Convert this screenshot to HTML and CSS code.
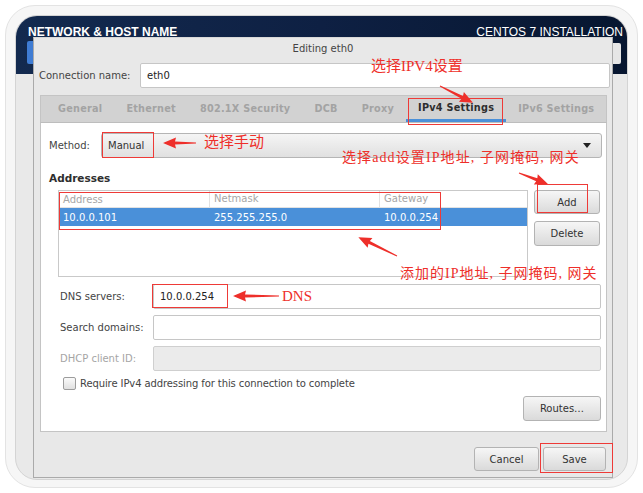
FILE: index.html
```html
<!DOCTYPE html>
<html lang="en">
<head>
<meta charset="utf-8">
<title>Editing eth0</title>
<link rel="stylesheet" href="styles.css">
</head>
<body>
<div class="frame">
  <div class="window">
    <div class="header">
      <div class="header-row">
        <span class="spoke-title">NETWORK &amp; HOST NAME</span>
        <span class="product">CENTOS 7 INSTALLATION</span>
      </div>
      <div class="header-buttons">
        <span class="done-btn"></span>
        <span class="kbd-btn"></span>
      </div>
    </div>

    <div class="dialog">
      <div class="dialog-title">Editing eth0</div>
      <div class="conn-row">
        <span class="conn-label">Connection name:</span>
        <div class="entry">eth0</div>
      </div>

      <div class="notebook">
        <div class="tabs">
          <span class="tab">General</span>
          <span class="tab">Ethernet</span>
          <span class="tab">802.1X Security</span>
          <span class="tab">DCB</span>
          <span class="tab">Proxy</span>
          <span class="tab active">IPv4 Settings</span>
          <span class="tab">IPv6 Settings</span>
        </div>
        <div class="panel">
          <div class="method-row">
            <span class="method-label">Method:</span>
            <div class="combo"><span>Manual</span><span class="combo-arrow"></span></div>
          </div>
          <div class="section-title">Addresses</div>
          <div class="addr-row">
            <div class="addr-table">
              <div class="tr thead">
                <span class="c1">Address</span>
                <span class="c2">Netmask</span>
                <span class="c3">Gateway</span>
              </div>
              <div class="tr selected">
                <span class="c1">10.0.0.101</span>
                <span class="c2">255.255.255.0</span>
                <span class="c3">10.0.0.254</span>
              </div>
            </div>
            <div class="addr-buttons">
              <div class="btn btn-add">Add</div>
              <div class="btn btn-del">Delete</div>
            </div>
          </div>
          <div class="form">
            <span class="f-label">DNS servers:</span>
            <div class="entry">10.0.0.254</div>
            <span class="f-label">Search domains:</span>
            <div class="entry"></div>
            <span class="f-label muted">DHCP client ID:</span>
            <div class="entry disabled"></div>
          </div>
          <div class="check-row">
            <span class="checkbox"></span>
            <span>Require IPv4 addressing for this connection to complete</span>
          </div>
          <div class="routes-row">
            <div class="btn btn-routes">Routes…</div>
          </div>
        </div>
      </div>

      <div class="dialog-footer">
        <div class="btn btn-footer">Cancel</div>
        <div class="btn btn-footer btn-save">Save</div>
      </div>
    </div>
  </div>
</div>

<!-- red annotations drawn over the screenshot -->
<div class="note-box box-ipv4"></div>
<div class="note-box box-manual"></div>
<div class="note-box box-add"></div>
<div class="note-box box-table"></div>
<div class="note-box box-dns"></div>
<div class="note-box box-save"></div>

<span class="note note-ipv4">选择IPV4设置</span>
<span class="note note-manual">选择手动</span>
<span class="note note-add">选择add设置IP地址, 子网掩码, 网关</span>
<span class="note note-added">添加的IP地址, 子网掩码, 网关</span>
<span class="note note-dns">DNS</span>

<svg class="arrows" width="643" height="493" viewBox="0 0 643 493">
  <g fill="#ee2f2a">
    <g transform="translate(440,86) rotate(27)"><polygon points="0,-0.5 25,-1.6 24,-5.5 37,0 24,5.5 25,1.6 0,0.5"/></g>
    <g transform="translate(196,143) rotate(180)"><polygon points="0,-0.5 21,-1.6 20,-5.5 33,0 20,5.5 21,1.6 0,0.5"/></g>
    <g transform="translate(519,173) rotate(21)"><polygon points="0,-0.5 19,-1.6 18,-5.5 31,0 18,5.5 19,1.6 0,0.5"/></g>
    <g transform="translate(397,256) rotate(206)"><polygon points="0,-0.5 31,-1.6 30,-5.5 43,0 30,5.5 31,1.6 0,0.5"/></g>
    <g transform="translate(279,296) rotate(180)"><polygon points="0,-0.5 34,-1.6 33,-5.5 46,0 33,5.5 34,1.6 0,0.5"/></g>
  </g>
</svg>
</body>
</html>
```

FILE: styles.css
```css
* { box-sizing: border-box; }

html, body {
  margin: 0;
  padding: 0;
  background: #ffffff;
  width: 643px;
  height: 493px;
  overflow: hidden;
  font-family: "DejaVu Sans", "Liberation Sans", sans-serif;
  font-size: 10px;
  color: #333;
}

.frame {
  position: relative;
  margin: 5px;
  width: 633px;
  height: 483px;
  padding: 9px;
  border: 1px solid #e3e3e3;
  border-radius: 30px;
  background: #f6f6f6;
}

.window {
  position: relative;
  width: 613px;
  height: 465px;
  border-radius: 22px;
  overflow: hidden;
  background: #e9e9e9;
  border: 1px solid #d4d4d4;
}

.header {
  height: 58px;
  background: linear-gradient(90deg, #132a4f 0%, #0e2043 50%, #071630 100%);
  color: #fff;
}

.header-row {
  display: flex;
  justify-content: space-between;
  align-items: center;
  padding: 7px 4px 0 12px;
  height: 24px;
  font-family: "Liberation Sans", sans-serif;
  font-size: 12px;
}

.spoke-title { font-weight: bold; }

.header-buttons {
  display: flex;
  justify-content: space-between;
  padding: 1px 6px 0 11px;
}

.done-btn {
  width: 12px;
  height: 23px;
  background: #3f7cd3;
  border-radius: 2px;
}

.kbd-btn {
  width: 12px;
  height: 21px;
  margin-top: 2px;
  background: #e6e6e6;
  border-radius: 2px;
}

/* ---------- dialog ---------- */
.dialog {
  position: absolute;
  left: 17px;
  top: 21px;
  width: 580px;
  height: 441px;
  background: #e8e8e8;
  border: 1px solid #aaaaaa;
  border-top-color: #d8d8d8;
  display: flex;
  flex-direction: column;
}

.dialog-title {
  height: 23px;
  line-height: 22px;
  text-align: center;
  color: #444;
}

.conn-row {
  display: flex;
  align-items: center;
  margin-top: 2px;
  padding: 0 2px 0 5px;
}

.conn-label { width: 101px; color: #444; }

.entry {
  flex: 1;
  height: 25px;
  background: #fff;
  border: 1px solid #c6c6c6;
  border-radius: 2px;
  padding: 0 6px;
  line-height: 23px;
  color: #222;
}

.entry.disabled { background: #ebebeb; border-color: #cfcfcf; }

.notebook {
  margin: 7px 5px 0 6px;
}

.tabs {
  display: flex;
  height: 28px;
  padding-left: 5px;
  background: #d2d2d2;
  border: 1px solid #c4c4c4;
  border-bottom-color: #bdbdbd;
  white-space: nowrap;
}

.tab {
  flex: none;
  padding: 0 12px;
  line-height: 26px;
  font-weight: bold;
  font-size: 9.7px;
  color: #a3a3a3;
  letter-spacing: 0.25px;
}

.tab.active {
  color: #2e2e2e;
  border-bottom: 3px solid #4a90d9;
  line-height: 24px;
}

.panel {
  height: 309px;
  background: #fff;
  border: 1px solid #c4c4c4;
  border-top: none;
  padding: 10px 4px 0 8px;
}

.method-row {
  display: flex;
  align-items: center;
}

.method-label { width: 52px; color: #444; }

.combo {
  flex: 1;
  height: 25px;
  display: flex;
  align-items: center;
  justify-content: space-between;
  padding: 0 10px 0 6px;
  background: linear-gradient(#f5f5f5, #e0e0e0);
  border: 1px solid #b5b5b5;
  border-radius: 3px;
  color: #333;
}

.combo-arrow {
  width: 0;
  height: 0;
  border-left: 4px solid transparent;
  border-right: 4px solid transparent;
  border-top: 5px solid #222;
}

.section-title {
  margin-top: 14px;
  font-weight: bold;
  color: #2e2e2e;
  font-size: 10.5px;
  height: 12px;
}

.addr-row {
  display: flex;
  gap: 6px;
  margin: 6px 0 0 9px;
  height: 87px;
}

.addr-table {
  width: 470px;
  height: 87px;
  border: 1px solid #c9c9c9;
  background: #fff;
}

.tr {
  display: flex;
  height: 18px;
  align-items: center;
}

.thead {
  height: 17px;
  color: #a6a6a6;
  border-bottom: 1px solid #e2e2e2;
}

.tr span { padding-left: 4px; }
.c1 { width: 150px; }
.c2 { width: 170px; }
.c3 { flex: 1; }
.thead .c2, .thead .c3 { border-left: 1px solid #e2e2e2; line-height: 16px; }

.selected {
  background: #4a90d9;
  color: #fff;
}

.selected .c2, .selected .c3 { padding-left: 5px; }

.addr-buttons {
  display: flex;
  flex-direction: column;
  gap: 7px;
  width: 66px;
}

.btn {
  height: 24px;
  display: flex;
  align-items: center;
  justify-content: center;
  background: linear-gradient(#f6f6f6, #dadada);
  border: 1px solid #b3b3b3;
  border-radius: 3px;
  color: #333;
}

.btn-del { height: 25px; }

.form {
  display: grid;
  grid-template-columns: 93px 448px;
  row-gap: 6px;
  align-items: center;
  margin: 7px 0 0 11px;
}

.form .entry { height: 25px; }
.f-label { color: #444; }
.f-label.muted { color: #a5a5a5; }

.check-row {
  display: flex;
  align-items: center;
  gap: 4px;
  margin: 6px 0 0 14px;
  color: #444;
  letter-spacing: -0.1px;
}

.checkbox {
  width: 13px;
  height: 13px;
  border: 1px solid #9c9c9c;
  border-radius: 2px;
  background: linear-gradient(#fafafa, #e0e0e0);
}

.routes-row {
  display: flex;
  justify-content: flex-end;
  margin-top: 6px;
  padding-right: 1px;
}

.btn-routes { width: 78px; height: 25px; }

.dialog-footer {
  display: flex;
  justify-content: flex-end;
  gap: 4px;
  margin-top: 15px;
  padding-right: 6px;
}

.btn-footer { width: 65px; height: 24px; }
.btn-save { width: 63px; }

/* ---------- annotations ---------- */
.note-box {
  position: absolute;
  border: 1px solid #ee3a37;
}

.box-ipv4 { left: 408px; top: 98px; width: 95px; height: 27px; }
.box-manual { left: 102px; top: 132px; width: 52px; height: 26px; }
.box-add { left: 537px; top: 184px; width: 51px; height: 29px; }
.box-table { left: 59px; top: 192px; width: 382px; height: 38px; }
.box-dns { left: 152px; top: 284px; width: 76px; height: 24px; }
.box-save { left: 540px; top: 443px; width: 73px; height: 30px; }

.note {
  position: absolute;
  color: #ee2f2a;
  font-family: "Liberation Serif", "Noto Sans CJK SC", serif;
  font-size: 14px;
  line-height: 16px;
  white-space: nowrap;
}

.note-ipv4 { left: 371px; top: 58px; font-size: 15px; }
.note-manual { left: 204px; top: 134px; font-size: 15px; }
.note-add { left: 342px; top: 150px; letter-spacing: 1.1px; }
.note-added { left: 400px; top: 266px; letter-spacing: 1px; }
.note-dns { left: 282px; top: 288px; font-size: 15px; }

.arrows {
  position: absolute;
  left: 0;
  top: 0;
  pointer-events: none;
}
```
